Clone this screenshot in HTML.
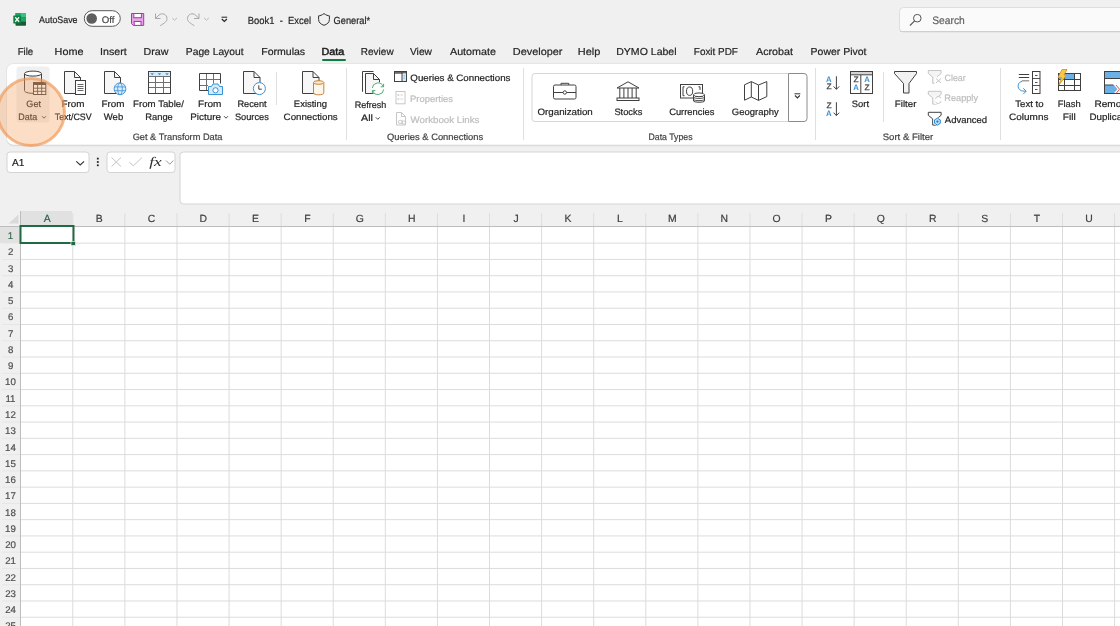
<!DOCTYPE html>
<html><head><meta charset="utf-8"><title>Excel</title>
<style>html,body{margin:0;padding:0;background:#f0f0f0;overflow:hidden} svg{display:block;will-change:transform} text{font-family:"Liberation Sans",sans-serif;white-space:pre;text-rendering:geometricPrecision} text.serif{font-family:"Liberation Serif",serif;font-style:italic}</style>
</head><body>
<svg width="1120" height="626" viewBox="0 0 1120 626" font-family="Liberation Sans, sans-serif"><rect x="0" y="0" width="1120" height="626" fill="#f0f0f0"/>
<rect x="6.5" y="64.5" width="1130" height="82" rx="7" fill="#e4e4e4"/>
<rect x="6.5" y="63.5" width="1130" height="82" rx="7" fill="#d2d2d2"/>
<rect x="6.5" y="63.5" width="1130" height="81.3" rx="7" fill="#ffffff" />
<path d="M6.5 138 V70.5 A7 7 0 0 1 13.5 63.5 H1120" fill="none" stroke="#e2e2e2" stroke-width="0.8"/>
<rect x="322" y="59" width="24" height="2" rx="1" fill="#107c41"/>
<rect x="7" y="152" width="82" height="20.5" rx="3" fill="#fff" stroke="#d4d4d4" stroke-width="1"/>
<rect x="107" y="152" width="68" height="20.5" rx="3" fill="#fff" stroke="#d4d4d4" stroke-width="1"/>
<rect x="180" y="152" width="960" height="52" rx="3.5" fill="#fff" stroke="#d4d4d4" stroke-width="1"/>
<rect x="20" y="226" width="1100" height="400" fill="#fff"/>
<rect x="20" y="211" width="52" height="15" fill="#e1e1e1"/>
<rect x="0" y="226" width="20" height="17" fill="#e1e1e1"/>
<rect x="72.29" y="226" width="1" height="400" fill="#dcdcdc"/>
<rect x="72.29" y="213" width="1" height="13" fill="#dedede"/>
<rect x="124.38" y="226" width="1" height="400" fill="#dcdcdc"/>
<rect x="124.38" y="213" width="1" height="13" fill="#dedede"/>
<rect x="176.47" y="226" width="1" height="400" fill="#dcdcdc"/>
<rect x="176.47" y="213" width="1" height="13" fill="#dedede"/>
<rect x="228.56" y="226" width="1" height="400" fill="#dcdcdc"/>
<rect x="228.56" y="213" width="1" height="13" fill="#dedede"/>
<rect x="280.65" y="226" width="1" height="400" fill="#dcdcdc"/>
<rect x="280.65" y="213" width="1" height="13" fill="#dedede"/>
<rect x="332.74" y="226" width="1" height="400" fill="#dcdcdc"/>
<rect x="332.74" y="213" width="1" height="13" fill="#dedede"/>
<rect x="384.83" y="226" width="1" height="400" fill="#dcdcdc"/>
<rect x="384.83" y="213" width="1" height="13" fill="#dedede"/>
<rect x="436.92" y="226" width="1" height="400" fill="#dcdcdc"/>
<rect x="436.92" y="213" width="1" height="13" fill="#dedede"/>
<rect x="489.01" y="226" width="1" height="400" fill="#dcdcdc"/>
<rect x="489.01" y="213" width="1" height="13" fill="#dedede"/>
<rect x="541.10" y="226" width="1" height="400" fill="#dcdcdc"/>
<rect x="541.10" y="213" width="1" height="13" fill="#dedede"/>
<rect x="593.19" y="226" width="1" height="400" fill="#dcdcdc"/>
<rect x="593.19" y="213" width="1" height="13" fill="#dedede"/>
<rect x="645.28" y="226" width="1" height="400" fill="#dcdcdc"/>
<rect x="645.28" y="213" width="1" height="13" fill="#dedede"/>
<rect x="697.37" y="226" width="1" height="400" fill="#dcdcdc"/>
<rect x="697.37" y="213" width="1" height="13" fill="#dedede"/>
<rect x="749.46" y="226" width="1" height="400" fill="#dcdcdc"/>
<rect x="749.46" y="213" width="1" height="13" fill="#dedede"/>
<rect x="801.55" y="226" width="1" height="400" fill="#dcdcdc"/>
<rect x="801.55" y="213" width="1" height="13" fill="#dedede"/>
<rect x="853.64" y="226" width="1" height="400" fill="#dcdcdc"/>
<rect x="853.64" y="213" width="1" height="13" fill="#dedede"/>
<rect x="905.73" y="226" width="1" height="400" fill="#dcdcdc"/>
<rect x="905.73" y="213" width="1" height="13" fill="#dedede"/>
<rect x="957.82" y="226" width="1" height="400" fill="#dcdcdc"/>
<rect x="957.82" y="213" width="1" height="13" fill="#dedede"/>
<rect x="1009.91" y="226" width="1" height="400" fill="#dcdcdc"/>
<rect x="1009.91" y="213" width="1" height="13" fill="#dedede"/>
<rect x="1062.00" y="226" width="1" height="400" fill="#dcdcdc"/>
<rect x="1062.00" y="213" width="1" height="13" fill="#dedede"/>
<rect x="1114.09" y="226" width="1" height="400" fill="#dcdcdc"/>
<rect x="1114.09" y="213" width="1" height="13" fill="#dedede"/>
<rect x="1166.18" y="226" width="1" height="400" fill="#dcdcdc"/>
<rect x="1166.18" y="213" width="1" height="13" fill="#dedede"/>
<rect x="21" y="242.66" width="1099" height="1" fill="#dcdcdc"/>
<rect x="2" y="242.66" width="18" height="1" fill="#e6e6e6"/>
<rect x="21" y="258.93" width="1099" height="1" fill="#dcdcdc"/>
<rect x="2" y="258.93" width="18" height="1" fill="#e6e6e6"/>
<rect x="21" y="275.19" width="1099" height="1" fill="#dcdcdc"/>
<rect x="2" y="275.19" width="18" height="1" fill="#e6e6e6"/>
<rect x="21" y="291.46" width="1099" height="1" fill="#dcdcdc"/>
<rect x="2" y="291.46" width="18" height="1" fill="#e6e6e6"/>
<rect x="21" y="307.72" width="1099" height="1" fill="#dcdcdc"/>
<rect x="2" y="307.72" width="18" height="1" fill="#e6e6e6"/>
<rect x="21" y="323.98" width="1099" height="1" fill="#dcdcdc"/>
<rect x="2" y="323.98" width="18" height="1" fill="#e6e6e6"/>
<rect x="21" y="340.25" width="1099" height="1" fill="#dcdcdc"/>
<rect x="2" y="340.25" width="18" height="1" fill="#e6e6e6"/>
<rect x="21" y="356.51" width="1099" height="1" fill="#dcdcdc"/>
<rect x="2" y="356.51" width="18" height="1" fill="#e6e6e6"/>
<rect x="21" y="372.78" width="1099" height="1" fill="#dcdcdc"/>
<rect x="2" y="372.78" width="18" height="1" fill="#e6e6e6"/>
<rect x="21" y="389.04" width="1099" height="1" fill="#dcdcdc"/>
<rect x="2" y="389.04" width="18" height="1" fill="#e6e6e6"/>
<rect x="21" y="405.30" width="1099" height="1" fill="#dcdcdc"/>
<rect x="2" y="405.30" width="18" height="1" fill="#e6e6e6"/>
<rect x="21" y="421.57" width="1099" height="1" fill="#dcdcdc"/>
<rect x="2" y="421.57" width="18" height="1" fill="#e6e6e6"/>
<rect x="21" y="437.83" width="1099" height="1" fill="#dcdcdc"/>
<rect x="2" y="437.83" width="18" height="1" fill="#e6e6e6"/>
<rect x="21" y="454.10" width="1099" height="1" fill="#dcdcdc"/>
<rect x="2" y="454.10" width="18" height="1" fill="#e6e6e6"/>
<rect x="21" y="470.36" width="1099" height="1" fill="#dcdcdc"/>
<rect x="2" y="470.36" width="18" height="1" fill="#e6e6e6"/>
<rect x="21" y="486.62" width="1099" height="1" fill="#dcdcdc"/>
<rect x="2" y="486.62" width="18" height="1" fill="#e6e6e6"/>
<rect x="21" y="502.89" width="1099" height="1" fill="#dcdcdc"/>
<rect x="2" y="502.89" width="18" height="1" fill="#e6e6e6"/>
<rect x="21" y="519.15" width="1099" height="1" fill="#dcdcdc"/>
<rect x="2" y="519.15" width="18" height="1" fill="#e6e6e6"/>
<rect x="21" y="535.42" width="1099" height="1" fill="#dcdcdc"/>
<rect x="2" y="535.42" width="18" height="1" fill="#e6e6e6"/>
<rect x="21" y="551.68" width="1099" height="1" fill="#dcdcdc"/>
<rect x="2" y="551.68" width="18" height="1" fill="#e6e6e6"/>
<rect x="21" y="567.94" width="1099" height="1" fill="#dcdcdc"/>
<rect x="2" y="567.94" width="18" height="1" fill="#e6e6e6"/>
<rect x="21" y="584.21" width="1099" height="1" fill="#dcdcdc"/>
<rect x="2" y="584.21" width="18" height="1" fill="#e6e6e6"/>
<rect x="21" y="600.47" width="1099" height="1" fill="#dcdcdc"/>
<rect x="2" y="600.47" width="18" height="1" fill="#e6e6e6"/>
<rect x="21" y="616.74" width="1099" height="1" fill="#dcdcdc"/>
<rect x="2" y="616.74" width="18" height="1" fill="#e6e6e6"/>
<rect x="21" y="633.00" width="1099" height="1" fill="#dcdcdc"/>
<rect x="2" y="633.00" width="18" height="1" fill="#e6e6e6"/>
<rect x="0" y="226" width="1120" height="1" fill="#bdbdbd"/>
<rect x="20" y="211" width="1" height="415" fill="#bdbdbd"/>
<path d="M18.5 214.5 L18.5 223.5 L8.5 223.5 Z" fill="#dadada"/>
<rect x="20.5" y="226" width="53" height="17" fill="none" stroke="#1e6b41" stroke-width="2"/>
<rect x="71" y="241.5" width="4.5" height="4" fill="#1e6b41" stroke="#fff" stroke-width="0.6"/>
<text x="43.75" y="222.00" font-size="10.4" fill="#2e6748" stroke="#2e6748" stroke-width="0.2" font-weight="400">A</text>
<text x="95.71" y="222.00" font-size="10.4" fill="#404040" stroke="#404040" stroke-width="0.2" font-weight="400">B</text>
<text x="147.68" y="222.00" font-size="10.4" fill="#404040" stroke="#404040" stroke-width="0.2" font-weight="400">C</text>
<text x="199.51" y="222.00" font-size="10.4" fill="#404040" stroke="#404040" stroke-width="0.2" font-weight="400">D</text>
<text x="251.98" y="222.00" font-size="10.4" fill="#404040" stroke="#404040" stroke-width="0.2" font-weight="400">E</text>
<text x="304.32" y="222.00" font-size="10.4" fill="#404040" stroke="#404040" stroke-width="0.2" font-weight="400">F</text>
<text x="355.79" y="222.00" font-size="10.4" fill="#404040" stroke="#404040" stroke-width="0.2" font-weight="400">G</text>
<text x="408.00" y="222.00" font-size="10.4" fill="#404040" stroke="#404040" stroke-width="0.2" font-weight="400">H</text>
<text x="462.47" y="222.00" font-size="10.4" fill="#404040" stroke="#404040" stroke-width="0.2" font-weight="400">I</text>
<text x="513.56" y="222.00" font-size="10.4" fill="#404040" stroke="#404040" stroke-width="0.2" font-weight="400">J</text>
<text x="564.40" y="222.00" font-size="10.4" fill="#404040" stroke="#404040" stroke-width="0.2" font-weight="400">K</text>
<text x="617.11" y="222.00" font-size="10.4" fill="#404040" stroke="#404040" stroke-width="0.2" font-weight="400">L</text>
<text x="667.95" y="222.00" font-size="10.4" fill="#404040" stroke="#404040" stroke-width="0.2" font-weight="400">M</text>
<text x="720.54" y="222.00" font-size="10.4" fill="#404040" stroke="#404040" stroke-width="0.2" font-weight="400">N</text>
<text x="772.51" y="222.00" font-size="10.4" fill="#404040" stroke="#404040" stroke-width="0.2" font-weight="400">O</text>
<text x="824.97" y="222.00" font-size="10.4" fill="#404040" stroke="#404040" stroke-width="0.2" font-weight="400">P</text>
<text x="876.69" y="222.00" font-size="10.4" fill="#404040" stroke="#404040" stroke-width="0.2" font-weight="400">Q</text>
<text x="928.90" y="222.00" font-size="10.4" fill="#404040" stroke="#404040" stroke-width="0.2" font-weight="400">R</text>
<text x="981.37" y="222.00" font-size="10.4" fill="#404040" stroke="#404040" stroke-width="0.2" font-weight="400">S</text>
<text x="1033.71" y="222.00" font-size="10.4" fill="#404040" stroke="#404040" stroke-width="0.2" font-weight="400">T</text>
<text x="1085.30" y="222.00" font-size="10.4" fill="#404040" stroke="#404040" stroke-width="0.2" font-weight="400">U</text>
<text x="1137.76" y="222.00" font-size="10.4" fill="#404040" stroke="#404040" stroke-width="0.2" font-weight="400">V</text>
<text x="7.82" y="239.10" font-size="9.7" fill="#3d6b52" stroke="#3d6b52" stroke-width="0.2" font-weight="400">1</text>
<text x="7.95" y="255.36" font-size="9.7" fill="#505050" stroke="#505050" stroke-width="0.2" font-weight="400">2</text>
<text x="8.07" y="271.63" font-size="9.7" fill="#505050" stroke="#505050" stroke-width="0.2" font-weight="400">3</text>
<text x="7.95" y="287.89" font-size="9.7" fill="#505050" stroke="#505050" stroke-width="0.2" font-weight="400">4</text>
<text x="7.95" y="304.16" font-size="9.7" fill="#505050" stroke="#505050" stroke-width="0.2" font-weight="400">5</text>
<text x="8.07" y="320.42" font-size="9.7" fill="#505050" stroke="#505050" stroke-width="0.2" font-weight="400">6</text>
<text x="7.95" y="336.68" font-size="9.7" fill="#505050" stroke="#505050" stroke-width="0.2" font-weight="400">7</text>
<text x="8.07" y="352.95" font-size="9.7" fill="#505050" stroke="#505050" stroke-width="0.2" font-weight="400">8</text>
<text x="8.07" y="369.21" font-size="9.7" fill="#505050" stroke="#505050" stroke-width="0.2" font-weight="400">9</text>
<text x="5.07" y="385.48" font-size="9.7" fill="#505050" stroke="#505050" stroke-width="0.2" font-weight="400">10</text>
<text x="5.45" y="401.74" font-size="9.7" fill="#505050" stroke="#505050" stroke-width="0.2" font-weight="400">11</text>
<text x="5.07" y="418.00" font-size="9.7" fill="#505050" stroke="#505050" stroke-width="0.2" font-weight="400">12</text>
<text x="5.07" y="434.27" font-size="9.7" fill="#505050" stroke="#505050" stroke-width="0.2" font-weight="400">13</text>
<text x="5.07" y="450.53" font-size="9.7" fill="#505050" stroke="#505050" stroke-width="0.2" font-weight="400">14</text>
<text x="5.07" y="466.80" font-size="9.7" fill="#505050" stroke="#505050" stroke-width="0.2" font-weight="400">15</text>
<text x="5.07" y="483.06" font-size="9.7" fill="#505050" stroke="#505050" stroke-width="0.2" font-weight="400">16</text>
<text x="5.07" y="499.32" font-size="9.7" fill="#505050" stroke="#505050" stroke-width="0.2" font-weight="400">17</text>
<text x="5.07" y="515.59" font-size="9.7" fill="#505050" stroke="#505050" stroke-width="0.2" font-weight="400">18</text>
<text x="5.07" y="531.85" font-size="9.7" fill="#505050" stroke="#505050" stroke-width="0.2" font-weight="400">19</text>
<text x="5.20" y="548.12" font-size="9.7" fill="#505050" stroke="#505050" stroke-width="0.2" font-weight="400">20</text>
<text x="5.20" y="564.38" font-size="9.7" fill="#505050" stroke="#505050" stroke-width="0.2" font-weight="400">21</text>
<text x="5.20" y="580.64" font-size="9.7" fill="#505050" stroke="#505050" stroke-width="0.2" font-weight="400">22</text>
<text x="5.20" y="596.91" font-size="9.7" fill="#505050" stroke="#505050" stroke-width="0.2" font-weight="400">23</text>
<text x="5.20" y="613.17" font-size="9.7" fill="#505050" stroke="#505050" stroke-width="0.2" font-weight="400">24</text>
<text x="5.20" y="629.44" font-size="9.7" fill="#505050" stroke="#505050" stroke-width="0.2" font-weight="400">25</text>
<rect x="15.5" y="13" width="10.5" height="12.8" rx="0.8" fill="#185c37"/>
<rect x="15.5" y="13" width="10.5" height="4.3" fill="#21a366"/>
<rect x="20.7" y="13" width="5.3" height="4.3" fill="#33c481"/>
<rect x="15.5" y="17.3" width="10.5" height="4.3" fill="#107c41"/>
<rect x="20.7" y="17.3" width="5.3" height="4.3" fill="#21a366"/>
<rect x="13.3" y="15.4" width="7.7" height="8.1" rx="0.6" fill="#107c41"/>
<path d="M15.2 17.2 L19.1 21.7 M19.1 17.2 L15.2 21.7" stroke="#e8fff0" stroke-width="1.3"/>
<rect x="84.3" y="10.7" width="36" height="15.6" rx="7.8" fill="#fff" stroke="#5a5a5a" stroke-width="1"/>
<circle cx="91.7" cy="18.5" r="5.3" fill="#5f5f5f"/>
<path d="M131.5 13.5 H143.7 V25.4 H133.3 L131.5 23.6 Z" fill="#e9a3e9" stroke="#a23ba6" stroke-width="1"/>
<rect x="133.8" y="13.5" width="7.6" height="4.2" fill="#fff" stroke="#a23ba6" stroke-width="1"/>
<rect x="134.2" y="21.5" width="6.8" height="3.9" fill="#fff" stroke="#a23ba6" stroke-width="1"/>
<path d="M155.5 13.5 V18.5 H160.5 M155.8 18.2 L159 15 C162 12.5 166.8 14 167 18.5 C167.2 21.5 164.5 23 160.2 25.7" fill="none" stroke="#a8a8a8" stroke-width="1"/>
<path d="M172.3 18 L174.6 20.2 L176.9 18" fill="none" stroke="#b0b0b0" stroke-width="0.9"/>
<path d="M199 13.5 V18.5 H194 M198.7 18.2 L195.5 15 C192.5 12.5 187.7 14 187.5 18.5 C187.3 21.5 190 23 194.3 25.7" fill="none" stroke="#a8a8a8" stroke-width="1"/>
<path d="M204.2 18 L206.5 20.2 L208.8 18" fill="none" stroke="#b0b0b0" stroke-width="0.9"/>
<path d="M221.5 17.2 H227.2" stroke="#242424" stroke-width="1"/>
<path d="M221.8 19 L224.35 21.5 L226.9 19" fill="none" stroke="#242424" stroke-width="1.2"/>
<path d="M324 13.6 C321.8 15.2 320 15.8 318.6 15.8 V19.5 C318.6 22.5 320.8 24.3 324 25.3 C327.2 24.3 329.4 22.5 329.4 19.5 V15.8 C328 15.8 326.2 15.2 324 13.6 Z" fill="none" stroke="#333" stroke-width="1"/>
<rect x="899.5" y="7.5" width="240" height="24.5" rx="4" fill="#fafafa" stroke="#dedede" stroke-width="1"/>
<path d="M900 31.5 H1120" stroke="#cfcfcf" stroke-width="1"/>
<circle cx="917.3" cy="18.2" r="3.8" fill="none" stroke="#555" stroke-width="1"/>
<path d="M914.6 20.9 L910 25.5" stroke="#555" stroke-width="1.1"/>
<rect x="16.5" y="66.5" width="33" height="56" rx="3" fill="#f0f0f0"/>
<path d="M24.5 74 V90.5 C24.5 92.3 28 93.3 33 93.3" fill="none" stroke="#404040" stroke-width="1"/>
<path d="M41.5 74 V82" fill="none" stroke="#404040" stroke-width="1"/>
<ellipse cx="33" cy="73.6" rx="8.5" ry="2.5" fill="#fff" stroke="#404040" stroke-width="1"/>
<rect x="33.5" y="82.5" width="12.3" height="12" fill="#fff" stroke="#404040" stroke-width="1"/>
<rect x="33.5" y="82.5" width="12.3" height="2.5" fill="#404040"/>
<path d="M33.5 88.2 H45.8 M33.5 91.3 H45.8 M37.6 85 V94.5 M41.7 85 V94.5" stroke="#404040" stroke-width="0.9"/>
<path d="M64.5 71.5 H74.5 L80.5 77.5 V93.5 H64.5 Z" fill="#f7f7f7" stroke="#404040" stroke-width="1"/><path d="M74.5 71.5 V77.5 H80.5" fill="none" stroke="#404040" stroke-width="1"/>
<rect x="75.5" y="80.5" width="10" height="14" fill="#fff" stroke="#404040" stroke-width="1"/>
<path d="M77.5 84.5 H83.5 M77.5 86.5 H83.5 M77.5 88.5 H83.5 M77.5 90.5 H83.5" stroke="#404040" stroke-width="0.8"/>
<path d="M104.5 71.5 H114.5 L120.5 77.5 V93.5 H104.5 Z" fill="#f7f7f7" stroke="#404040" stroke-width="1"/><path d="M114.5 71.5 V77.5 H120.5" fill="none" stroke="#404040" stroke-width="1"/>
<circle cx="120" cy="88.8" r="5.9" fill="#d9ecfa" stroke="#3b8fd4" stroke-width="0.9"/>
<ellipse cx="120" cy="88.8" rx="2.3" ry="5.9" fill="none" stroke="#3b8fd4" stroke-width="0.8"/>
<path d="M114.3 86.9 H125.7 M114.3 90.7 H125.7" stroke="#3b8fd4" stroke-width="0.8"/>
<rect x="148.5" y="71.5" width="22" height="22" fill="#fff" stroke="#404040" stroke-width="1"/>
<rect x="149" y="72" width="21" height="4" fill="#d6ebf9"/>
<path d="M148.5 76.5 H170.5 M149 82.5 H170 M149 87.5 H170 M155.5 77 V93 M163.5 77 V93" stroke="#707070" stroke-width="1"/>
<path d="M150.39999999999998 73.2 H154.0 L152.2 75.2 Z" fill="#3a93d6"/>
<path d="M157.7 73.2 H161.3 L159.5 75.2 Z" fill="#3a93d6"/>
<path d="M165.2 73.2 H168.8 L167 75.2 Z" fill="#3a93d6"/>
<path d="M208 90.5 H199.5 V73.5 H220.5 V83.5" fill="#fff" stroke="#404040" stroke-width="1"/>
<path d="M200 79.5 H220 M200 85.5 H208 M206.5 74 V90 M213.5 74 V83.5" stroke="#707070" stroke-width="1"/>
<path d="M208.5 86.5 H211.5 L213 84 H218 L219.5 86.5 H222.5 V94.5 H208.5 Z" fill="#d6ebf9" stroke="#3a93d6" stroke-width="1"/>
<circle cx="215.5" cy="90.3" r="2.6" fill="#fff" stroke="#3a93d6" stroke-width="1"/>
<path d="M243.5 71.5 H254 L260 77.5 V93.5 H243.5 Z" fill="#f7f7f7" stroke="#404040" stroke-width="1"/><path d="M254 71.5 V77.5 H260" fill="none" stroke="#404040" stroke-width="1"/>
<circle cx="259.4" cy="88.6" r="6" fill="#fff" stroke="#3a93d6" stroke-width="1"/>
<path d="M258.8 85.3 V89.2 H261.8" fill="none" stroke="#404040" stroke-width="1"/>
<path d="M302.5 71.5 H313 L319 77.5 V93.5 H302.5 Z" fill="#f7f7f7" stroke="#404040" stroke-width="1"/><path d="M313 71.5 V77.5 H319" fill="none" stroke="#404040" stroke-width="1"/>
<path d="M313.5 82.5 V92.8 C313.5 94.2 316 94.8 318.7 94.8 C321.4 94.8 323.8 94.2 323.8 92.8 V82.5" fill="#fdf6ec" stroke="#c9822e" stroke-width="1"/>
<ellipse cx="318.65" cy="82.5" rx="5.15" ry="1.8" fill="#fde9cf" stroke="#c9822e" stroke-width="1"/>
<path d="M362.5 91.8 V71.5 H373.5" fill="none" stroke="#404040" stroke-width="1"/>
<path d="M365.5 73.5 H373.5 L379.5 79.5 V93.5 H365.5 Z" fill="#f7f7f7" stroke="#404040" stroke-width="1"/><path d="M373.5 73.5 V79.5 H379.5" fill="none" stroke="#404040" stroke-width="1"/>
<circle cx="378" cy="88.7" r="6.6" fill="#fff"/>
<path d="M372.3 88 A5.7 5.7 0 0 1 383.3 86.6" fill="none" stroke="#3fa066" stroke-width="0.9"/>
<path d="M383.7 89.4 A5.7 5.7 0 0 1 372.7 90.8" fill="none" stroke="#3fa066" stroke-width="0.9"/>
<path d="M380.6 86.8 H383.6 V83.8" fill="none" stroke="#3fa066" stroke-width="0.9"/>
<path d="M375.4 90.6 H372.4 V93.6" fill="none" stroke="#3fa066" stroke-width="0.9"/>
<rect x="394.5" y="71.5" width="12" height="10" fill="#fff" stroke="#404040" stroke-width="1"/>
<rect x="395" y="72" width="11" height="1.8" fill="#6a6a6a"/>
<rect x="402.3" y="73.5" width="3.7" height="7.5" fill="#d6ebf9"/>
<path d="M402 72 V81.5" stroke="#404040" stroke-width="1"/>
<path d="M404.2 75.3 V76.3 M404.2 77.6 V78.6" stroke="#3a93d6" stroke-width="0.9"/>
<rect x="396" y="91.5" width="9" height="12.3" fill="#fff" stroke="#c6c6c6" stroke-width="1"/>
<path d="M398 95 H399.5 M400.5 95 H403 M398 99 H399.5 M400.5 99 H403 M398 94 V96 M398 98 V100" stroke="#c6c6c6" stroke-width="0.8"/>
<path d="M396.5 112.5 H401.5 L405.5 116.5 V125 H396.5 Z" fill="#fff" stroke="#c6c6c6" stroke-width="1"/>
<path d="M401.5 112.5 V116.5 H405.5" fill="none" stroke="#c6c6c6" stroke-width="1"/>
<ellipse cx="400.5" cy="122" rx="2.3" ry="1.6" fill="#fff" stroke="#c6c6c6" stroke-width="0.9"/>
<ellipse cx="403.6" cy="122.5" rx="2.3" ry="1.6" fill="none" stroke="#c6c6c6" stroke-width="0.9"/>
<rect x="276" y="72" width="1" height="33" fill="#e0e0e0"/>
<rect x="346" y="68" width="1" height="72" fill="#e0e0e0"/>
<rect x="523" y="68" width="1" height="72" fill="#e0e0e0"/>
<rect x="815" y="68" width="1" height="72" fill="#e0e0e0"/>
<rect x="883" y="72" width="1" height="50" fill="#e0e0e0"/>
<rect x="1000" y="68" width="1" height="72" fill="#e0e0e0"/>
<path d="M535 73.5 H788.5 V121.5 H535 A3 3 0 0 1 532 118.5 V76.5 A3 3 0 0 1 535 73.5 Z" fill="#fff" stroke="#d6d6d6" stroke-width="1"/>
<path d="M788.5 73.5 H804 A3 3 0 0 1 807 76.5 V118.5 A3 3 0 0 1 804 121.5 H788.5 Z" fill="#fff" stroke="#8c8c8c" stroke-width="1"/>
<path d="M794.5 93.8 H800.3" stroke="#333" stroke-width="1"/>
<path d="M795 95.5 L797.4 98 L799.8 95.5" fill="none" stroke="#333" stroke-width="1.1"/>
<rect x="553.5" y="85" width="22.5" height="14" rx="1.5" fill="#fff" stroke="#404040" stroke-width="1"/>
<path d="M561 85 V83.3 H568.8 V85" fill="none" stroke="#404040" stroke-width="1"/>
<path d="M553.5 92.5 H563 M566.6 92.5 H576" stroke="#404040" stroke-width="1"/>
<circle cx="564.8" cy="92.5" r="1.7" fill="#fff" stroke="#404040" stroke-width="1"/>
<path d="M617 88 L628 81.8 L639 88 Z" fill="#fff" stroke="#404040" stroke-width="1" stroke-linejoin="round"/>
<rect x="617" y="98" width="22" height="2.5" fill="#fff" stroke="#404040" stroke-width="1"/>
<path d="M619.8 88 V98" stroke="#404040" stroke-width="1"/>
<path d="M623.9 88 V98" stroke="#404040" stroke-width="1"/>
<path d="M628 88 V98" stroke="#404040" stroke-width="1"/>
<path d="M632.1 88 V98" stroke="#404040" stroke-width="1"/>
<path d="M636.2 88 V98" stroke="#404040" stroke-width="1"/>
<rect x="680.5" y="84.5" width="22" height="13.5" fill="#fff" stroke="#404040" stroke-width="1"/>
<path d="M684.5 86.8 H683 V95.7 H684.5 M698.5 86.8 H700 V90" fill="none" stroke="#404040" stroke-width="1"/>
<ellipse cx="689.6" cy="91.2" rx="3.1" ry="4.2" fill="none" stroke="#404040" stroke-width="1"/>
<path d="M693.5 94.8 V101 C693.5 102.6 704.5 102.6 704.5 101 V94.8" fill="#fff" stroke="#404040" stroke-width="1"/>
<path d="M693.5 97.2 C693.5 98.8 704.5 98.8 704.5 97.2 M693.5 99.4 C693.5 101 704.5 101 704.5 99.4" fill="none" stroke="#404040" stroke-width="0.9"/>
<ellipse cx="699" cy="94.8" rx="5.5" ry="1.9" fill="#fff" stroke="#404040" stroke-width="1"/>
<path d="M744.5 84.8 L751.3 81.6 L758.5 85 L766.8 81.6 V96.6 L758.5 100.4 L751.3 97 L744.5 100.2 Z" fill="#fff" stroke="#404040" stroke-width="1" stroke-linejoin="round"/>
<path d="M751.3 81.6 V97 M758.5 85 V100.4" stroke="#404040" stroke-width="1"/>
<text x="826.1" y="82.0" font-size="7.9" font-weight="700" fill="#3a93d6" textLength="5.6" lengthAdjust="spacingAndGlyphs">A</text>
<text x="826.4000000000001" y="89.19999999999999" font-size="7.9" font-weight="400" fill="#404040" stroke="#404040" stroke-width="0.25" textLength="5.1" lengthAdjust="spacingAndGlyphs">Z</text>
<path d="M836.4 76.3 V89.3 M833.6 86.4 L836.4 89.3 L839.2 86.4" fill="none" stroke="#404040" stroke-width="1"/>
<text x="826.4000000000001" y="107.6" font-size="7.9" font-weight="400" fill="#404040" stroke="#404040" stroke-width="0.25" textLength="5.1" lengthAdjust="spacingAndGlyphs">Z</text>
<text x="826.1" y="115.60000000000001" font-size="7.9" font-weight="700" fill="#3a93d6" textLength="5.6" lengthAdjust="spacingAndGlyphs">A</text>
<path d="M836.4 102.2 V115.6 M833.6 112.7 L836.4 115.6 L839.2 112.7" fill="none" stroke="#404040" stroke-width="1"/>
<rect x="850.5" y="71.5" width="22" height="22" fill="#fff" stroke="#404040" stroke-width="1"/>
<rect x="851" y="72" width="21" height="2.5" fill="#d4d4d4"/>
<path d="M850.5 74.8 H872.5 M860.8 74.8 V93.5" stroke="#404040" stroke-width="1"/>
<text x="853.5" y="82.19999999999999" font-size="7.9" font-weight="400" fill="#404040" stroke="#404040" stroke-width="0.25" textLength="5.1" lengthAdjust="spacingAndGlyphs">Z</text>
<text x="853.1999999999999" y="90.3" font-size="7.9" font-weight="700" fill="#3a93d6" textLength="5.6" lengthAdjust="spacingAndGlyphs">A</text>
<text x="864.1999999999999" y="82.3" font-size="7.9" font-weight="700" fill="#3a93d6" textLength="5.6" lengthAdjust="spacingAndGlyphs">A</text>
<text x="864.5" y="90.39999999999999" font-size="7.9" font-weight="400" fill="#404040" stroke="#404040" stroke-width="0.25" textLength="5.1" lengthAdjust="spacingAndGlyphs">Z</text>
<path d="M894.5 71.5 H916.5 V73.5 L909 83.5 V93 H903.5 V83.5 L894.5 73.5 Z" fill="#f2f2f2" stroke="#404040" stroke-width="1" stroke-linejoin="round"/>
<path d="M928.3 70.5 H941.0999999999999 V73.5 L936.6999999999999 77.1 V83.3 H932.6999999999999 V77.1 L928.3 73.5 Z" fill="#f4f4f4" stroke="#c6c6c6" stroke-width="1" stroke-linejoin="round"/>
<rect x="934.5" y="77" width="7.5" height="7" fill="#fff"/>
<path d="M936 78.5 L941 83 M941 78.5 L936 83" stroke="#c6c6c6" stroke-width="1"/>
<path d="M928.3 91.3 H941.0999999999999 V94.3 L936.6999999999999 97.89999999999999 V104.1 H932.6999999999999 V97.89999999999999 L928.3 94.3 Z" fill="#f4f4f4" stroke="#c6c6c6" stroke-width="1" stroke-linejoin="round"/>
<rect x="934.5" y="96.5" width="7.5" height="7.5" fill="#fff"/>
<path d="M935.5 99 A2.9 2.9 0 0 1 941 98.2 M941 101 A2.9 2.9 0 0 1 935.5 101.8" fill="none" stroke="#c6c6c6" stroke-width="1"/>
<path d="M928.3 112.3 H941.0999999999999 V115.3 L936.6999999999999 118.89999999999999 V125.1 H932.6999999999999 V118.89999999999999 L928.3 115.3 Z" fill="#fff" stroke="#404040" stroke-width="1" stroke-linejoin="round"/>
<circle cx="937.4" cy="121.6" r="4" fill="#fff"/>
<path d="M937.4 118.2 L940.3 119.9 V123.3 L937.4 125 L934.5 123.3 V119.9 Z" fill="#bfe0f7" stroke="#2f86cf" stroke-width="1" stroke-linejoin="round"/>
<circle cx="937.4" cy="121.6" r="1.1" fill="#1f6fb5"/>
<path d="M1018.8 74.5 H1029.2 M1018.8 77.5 H1029.2" stroke="#404040" stroke-width="1"/>
<path d="M1021.8 80.8 H1029.2" stroke="#8a8a8a" stroke-width="1.2"/>
<path d="M1022 81.3 C1016.5 82.5 1016.5 91 1024 91.2 H1026" fill="none" stroke="#3a93d6" stroke-width="1"/>
<path d="M1023.3 88.3 L1026.2 91.2 L1023.3 94.1" fill="none" stroke="#3a93d6" stroke-width="1"/>
<rect x="1032.5" y="71.5" width="7.5" height="22" fill="#fff" stroke="#404040" stroke-width="1"/>
<path d="M1032.5 78.5 H1040 M1032.5 85.5 H1040 M1035 75.5 H1037.5 M1035 82.5 H1037.5 M1035 89.5 H1037.5" stroke="#404040" stroke-width="0.9"/>
<rect x="1058.5" y="73.5" width="22" height="17" fill="#fff" stroke="#404040" stroke-width="1"/>
<path d="M1059 74 H1074.5 V79.5 H1059 Z" fill="#6cb0e8"/>
<path d="M1058.5 79.5 H1080.5 M1058.5 85.5 H1080.5 M1064.5 73.5 V90.5 M1074.5 73.5 V90.5" stroke="#404040" stroke-width="1"/>
<path d="M1062 69.5 H1067 L1064 75 H1066.5 L1059 85 L1061.5 77.5 H1058 Z" fill="#f7c948" stroke="#d9952a" stroke-width="0.9" stroke-linejoin="round"/>
<rect x="1104.5" y="71.5" width="30" height="22" fill="#fff" stroke="#404040" stroke-width="1"/>
<rect x="1105" y="72" width="29" height="6.5" fill="#6cb0e8"/>
<path d="M1105 85 H1114 L1117.5 89.2 L1114 93 H1105 Z" fill="#6cb0e8"/>
<path d="M1104.5 78.5 H1135 M1104.5 85 H1113.5" stroke="#404040" stroke-width="1"/>
<path d="M1116 85 L1119.5 89.2 L1116 93.5" fill="none" stroke="#d9534f" stroke-width="1"/>
<path d="M76.3 161.3 L80.2 165 L84.1 161.3" fill="none" stroke="#333" stroke-width="1.1"/>
<rect x="96.9" y="157.7" width="1.8" height="1.8" fill="#242424"/>
<rect x="96.9" y="161.1" width="1.8" height="1.8" fill="#242424"/>
<rect x="96.9" y="164.4" width="1.8" height="1.8" fill="#242424"/>
<path d="M111.5 157.5 L121 166.5 M121 157.5 L111.5 166.5" stroke="#c4c4c4" stroke-width="1"/>
<path d="M129.2 162 L133.3 165.8 L142 157.6" fill="none" stroke="#c4c4c4" stroke-width="1"/>
<path d="M166 160.5 L169.7 164.2 L173.4 160.5" fill="none" stroke="#8a8a8a" stroke-width="0.9"/>
<text x="39.10" y="22.70" font-size="9.5" fill="#242424" font-weight="400" stroke="#242424" stroke-width="0.2" textLength="38.39" lengthAdjust="spacingAndGlyphs">AutoSave</text>
<text x="101.85" y="22.70" font-size="9.5" fill="#424242" font-weight="400" stroke="#424242" stroke-width="0.2" textLength="12.70" lengthAdjust="spacingAndGlyphs">Off</text>
<text x="247.82" y="23.60" font-size="10.3" fill="#242424" font-weight="400" stroke="#242424" stroke-width="0.2" textLength="63.24" lengthAdjust="spacingAndGlyphs">Book1  -  Excel</text>
<text x="333.55" y="23.60" font-size="10.3" fill="#242424" font-weight="400" stroke="#242424" stroke-width="0.2" textLength="36.58" lengthAdjust="spacingAndGlyphs">General*</text>
<text x="932.22" y="24.00" font-size="10.8" fill="#616161" font-weight="400" stroke="#616161" stroke-width="0.2" textLength="32.52" lengthAdjust="spacingAndGlyphs">Search</text>
<text x="17.68" y="55.30" font-size="10.1" fill="#242424" font-weight="400" stroke="#242424" stroke-width="0.2" textLength="15.57" lengthAdjust="spacingAndGlyphs">File</text>
<text x="54.60" y="55.30" font-size="10.1" fill="#242424" font-weight="400" stroke="#242424" stroke-width="0.2" textLength="28.87" lengthAdjust="spacingAndGlyphs">Home</text>
<text x="100.11" y="55.30" font-size="10.1" fill="#242424" font-weight="400" stroke="#242424" stroke-width="0.2" textLength="26.69" lengthAdjust="spacingAndGlyphs">Insert</text>
<text x="143.51" y="55.30" font-size="10.1" fill="#242424" font-weight="400" stroke="#242424" stroke-width="0.2" textLength="24.96" lengthAdjust="spacingAndGlyphs">Draw</text>
<text x="185.84" y="55.30" font-size="10.1" fill="#242424" font-weight="400" stroke="#242424" stroke-width="0.2" textLength="57.70" lengthAdjust="spacingAndGlyphs">Page Layout</text>
<text x="261.22" y="55.30" font-size="10.1" fill="#242424" font-weight="400" stroke="#242424" stroke-width="0.2" textLength="43.93" lengthAdjust="spacingAndGlyphs">Formulas</text>
<text x="360.86" y="55.30" font-size="10.1" fill="#242424" font-weight="400" stroke="#242424" stroke-width="0.2" textLength="32.75" lengthAdjust="spacingAndGlyphs">Review</text>
<text x="410.00" y="55.30" font-size="10.1" fill="#242424" font-weight="400" stroke="#242424" stroke-width="0.2" textLength="21.95" lengthAdjust="spacingAndGlyphs">View</text>
<text x="450.00" y="55.30" font-size="10.1" fill="#242424" font-weight="400" stroke="#242424" stroke-width="0.2" textLength="45.90" lengthAdjust="spacingAndGlyphs">Automate</text>
<text x="512.79" y="55.30" font-size="10.1" fill="#242424" font-weight="400" stroke="#242424" stroke-width="0.2" textLength="49.73" lengthAdjust="spacingAndGlyphs">Developer</text>
<text x="577.79" y="55.30" font-size="10.1" fill="#242424" font-weight="400" stroke="#242424" stroke-width="0.2" textLength="22.50" lengthAdjust="spacingAndGlyphs">Help</text>
<text x="616.22" y="55.30" font-size="10.1" fill="#242424" font-weight="400" stroke="#242424" stroke-width="0.2" textLength="60.35" lengthAdjust="spacingAndGlyphs">DYMO Label</text>
<text x="693.86" y="55.30" font-size="10.1" fill="#242424" font-weight="400" stroke="#242424" stroke-width="0.2" textLength="44.00" lengthAdjust="spacingAndGlyphs">Foxit PDF</text>
<text x="756.00" y="55.30" font-size="10.1" fill="#242424" font-weight="400" stroke="#242424" stroke-width="0.2" textLength="36.95" lengthAdjust="spacingAndGlyphs">Acrobat</text>
<text x="810.62" y="55.30" font-size="10.1" fill="#242424" font-weight="400" stroke="#242424" stroke-width="0.2" textLength="55.83" lengthAdjust="spacingAndGlyphs">Power Pivot</text>
<text x="321.49" y="55.30" font-size="10.1" fill="#1a1a1a" font-weight="400" stroke="#1a1a1a" stroke-width="0.45" textLength="22.92" lengthAdjust="spacingAndGlyphs">Data</text>
<text x="26.36" y="107.40" font-size="9.3" fill="#242424" font-weight="400" stroke="#242424" stroke-width="0.2" textLength="14.64" lengthAdjust="spacingAndGlyphs">Get</text>
<text x="18.22" y="120.00" font-size="9.3" fill="#242424" font-weight="400" stroke="#242424" stroke-width="0.2" textLength="18.88" lengthAdjust="spacingAndGlyphs">Data</text>
<text x="61.47" y="107.40" font-size="9.3" fill="#242424" font-weight="400" stroke="#242424" stroke-width="0.2" textLength="23.01" lengthAdjust="spacingAndGlyphs">From</text>
<text x="54.76" y="120.00" font-size="9.3" fill="#242424" font-weight="400" stroke="#242424" stroke-width="0.2" textLength="36.84" lengthAdjust="spacingAndGlyphs">Text/CSV</text>
<text x="101.47" y="107.40" font-size="9.3" fill="#242424" font-weight="400" stroke="#242424" stroke-width="0.2" textLength="23.01" lengthAdjust="spacingAndGlyphs">From</text>
<text x="103.80" y="120.00" font-size="9.3" fill="#242424" font-weight="400" stroke="#242424" stroke-width="0.2" textLength="19.41" lengthAdjust="spacingAndGlyphs">Web</text>
<text x="133.08" y="107.40" font-size="9.3" fill="#242424" font-weight="400" stroke="#242424" stroke-width="0.2" textLength="50.84" lengthAdjust="spacingAndGlyphs">From Table/</text>
<text x="145.30" y="120.00" font-size="9.3" fill="#242424" font-weight="400" stroke="#242424" stroke-width="0.2" textLength="27.51" lengthAdjust="spacingAndGlyphs">Range</text>
<text x="198.06" y="107.40" font-size="9.3" fill="#242424" font-weight="400" stroke="#242424" stroke-width="0.2" textLength="23.43" lengthAdjust="spacingAndGlyphs">From</text>
<text x="190.27" y="120.00" font-size="9.3" fill="#242424" font-weight="400" stroke="#242424" stroke-width="0.2" textLength="30.69" lengthAdjust="spacingAndGlyphs">Picture</text>
<text x="237.41" y="107.40" font-size="9.3" fill="#242424" font-weight="400" stroke="#242424" stroke-width="0.2" textLength="29.16" lengthAdjust="spacingAndGlyphs">Recent</text>
<text x="234.90" y="120.00" font-size="9.3" fill="#242424" font-weight="400" stroke="#242424" stroke-width="0.2" textLength="33.96" lengthAdjust="spacingAndGlyphs">Sources</text>
<text x="293.89" y="107.40" font-size="9.3" fill="#242424" font-weight="400" stroke="#242424" stroke-width="0.2" textLength="33.13" lengthAdjust="spacingAndGlyphs">Existing</text>
<text x="283.64" y="120.00" font-size="9.3" fill="#242424" font-weight="400" stroke="#242424" stroke-width="0.2" textLength="54.06" lengthAdjust="spacingAndGlyphs">Connections</text>
<text x="354.71" y="108.20" font-size="9.3" fill="#242424" font-weight="400" stroke="#242424" stroke-width="0.2" textLength="31.59" lengthAdjust="spacingAndGlyphs">Refresh</text>
<text x="361.00" y="120.70" font-size="9.3" fill="#242424" font-weight="400" stroke="#242424" stroke-width="0.2" textLength="11.90" lengthAdjust="spacingAndGlyphs">All</text>
<text x="410.34" y="80.90" font-size="9.3" fill="#242424" font-weight="400" stroke="#242424" stroke-width="0.2" textLength="100.14" lengthAdjust="spacingAndGlyphs">Queries &amp; Connections</text>
<text x="410.09" y="101.70" font-size="9.3" fill="#bdbdbd" font-weight="400" stroke="#bdbdbd" stroke-width="0.2" textLength="42.93" lengthAdjust="spacingAndGlyphs">Properties</text>
<text x="410.60" y="122.60" font-size="9.3" fill="#bdbdbd" font-weight="400" stroke="#bdbdbd" stroke-width="0.2" textLength="68.83" lengthAdjust="spacingAndGlyphs">Workbook Links</text>
<text x="132.65" y="139.80" font-size="9.3" fill="#424242" font-weight="400" stroke="#424242" stroke-width="0.2" textLength="89.77" lengthAdjust="spacingAndGlyphs">Get &amp; Transform Data</text>
<text x="386.95" y="139.80" font-size="9.3" fill="#424242" font-weight="400" stroke="#424242" stroke-width="0.2" textLength="96.21" lengthAdjust="spacingAndGlyphs">Queries &amp; Connections</text>
<text x="648.53" y="139.80" font-size="9.3" fill="#424242" font-weight="400" stroke="#424242" stroke-width="0.2" textLength="44.01" lengthAdjust="spacingAndGlyphs">Data Types</text>
<text x="882.68" y="139.80" font-size="9.3" fill="#424242" font-weight="400" stroke="#424242" stroke-width="0.2" textLength="50.60" lengthAdjust="spacingAndGlyphs">Sort &amp; Filter</text>
<text x="537.44" y="114.50" font-size="9.3" fill="#242424" font-weight="400" stroke="#242424" stroke-width="0.2" textLength="55.35" lengthAdjust="spacingAndGlyphs">Organization</text>
<text x="614.40" y="114.50" font-size="9.3" fill="#242424" font-weight="400" stroke="#242424" stroke-width="0.2" textLength="27.96" lengthAdjust="spacingAndGlyphs">Stocks</text>
<text x="669.15" y="114.50" font-size="9.3" fill="#242424" font-weight="400" stroke="#242424" stroke-width="0.2" textLength="45.26" lengthAdjust="spacingAndGlyphs">Currencies</text>
<text x="731.85" y="114.50" font-size="9.3" fill="#242424" font-weight="400" stroke="#242424" stroke-width="0.2" textLength="46.85" lengthAdjust="spacingAndGlyphs">Geography</text>
<text x="851.79" y="107.30" font-size="9.3" fill="#242424" font-weight="400" stroke="#242424" stroke-width="0.2" textLength="17.27" lengthAdjust="spacingAndGlyphs">Sort</text>
<text x="894.88" y="107.30" font-size="9.3" fill="#242424" font-weight="400" stroke="#242424" stroke-width="0.2" textLength="21.55" lengthAdjust="spacingAndGlyphs">Filter</text>
<text x="944.56" y="80.50" font-size="9.3" fill="#bdbdbd" font-weight="400" stroke="#bdbdbd" stroke-width="0.2" textLength="21.11" lengthAdjust="spacingAndGlyphs">Clear</text>
<text x="944.31" y="101.40" font-size="9.3" fill="#bdbdbd" font-weight="400" stroke="#bdbdbd" stroke-width="0.2" textLength="33.72" lengthAdjust="spacingAndGlyphs">Reapply</text>
<text x="944.80" y="122.50" font-size="9.3" fill="#242424" font-weight="400" stroke="#242424" stroke-width="0.2" textLength="42.37" lengthAdjust="spacingAndGlyphs">Advanced</text>
<text x="1015.34" y="107.40" font-size="9.3" fill="#242424" font-weight="400" stroke="#242424" stroke-width="0.2" textLength="28.26" lengthAdjust="spacingAndGlyphs">Text to</text>
<text x="1009.13" y="120.00" font-size="9.3" fill="#242424" font-weight="400" stroke="#242424" stroke-width="0.2" textLength="39.27" lengthAdjust="spacingAndGlyphs">Columns</text>
<text x="1057.80" y="107.40" font-size="9.3" fill="#242424" font-weight="400" stroke="#242424" stroke-width="0.2" textLength="22.89" lengthAdjust="spacingAndGlyphs">Flash</text>
<text x="1062.75" y="120.00" font-size="9.3" fill="#242424" font-weight="400" stroke="#242424" stroke-width="0.2" textLength="12.97" lengthAdjust="spacingAndGlyphs">Fill</text>
<text x="1094.46" y="107.40" font-size="9.3" fill="#242424" font-weight="400" stroke="#242424" stroke-width="0.2" textLength="37.45" lengthAdjust="spacingAndGlyphs">Remove</text>
<text x="1089.47" y="120.00" font-size="9.3" fill="#242424" font-weight="400" stroke="#242424" stroke-width="0.2" textLength="45.71" lengthAdjust="spacingAndGlyphs">Duplicates</text>
<text x="12.10" y="165.90" font-size="10.1" fill="#242424" font-weight="400" stroke="#242424" stroke-width="0.2" textLength="12.36" lengthAdjust="spacingAndGlyphs">A1</text>
<path d="M42.0 116.2 L44.0 118.2 L46.0 116.2" fill="none" stroke="#333" stroke-width="0.9"/>
<path d="M224.0 116.2 L226.0 118.2 L228.0 116.2" fill="none" stroke="#333" stroke-width="0.9"/>
<path d="M375.8 117.3 L377.8 119.3 L379.8 117.3" fill="none" stroke="#333" stroke-width="0.9"/>
<text x="149.3" y="166.3" class="serif" font-size="13" fill="#303030" textLength="12.5" lengthAdjust="spacingAndGlyphs">fx</text>
<circle cx="31" cy="112" r="33.5" fill="rgba(246,160,95,0.36)" stroke="rgba(238,145,75,0.62)" stroke-width="3"/></svg>
</body></html>
